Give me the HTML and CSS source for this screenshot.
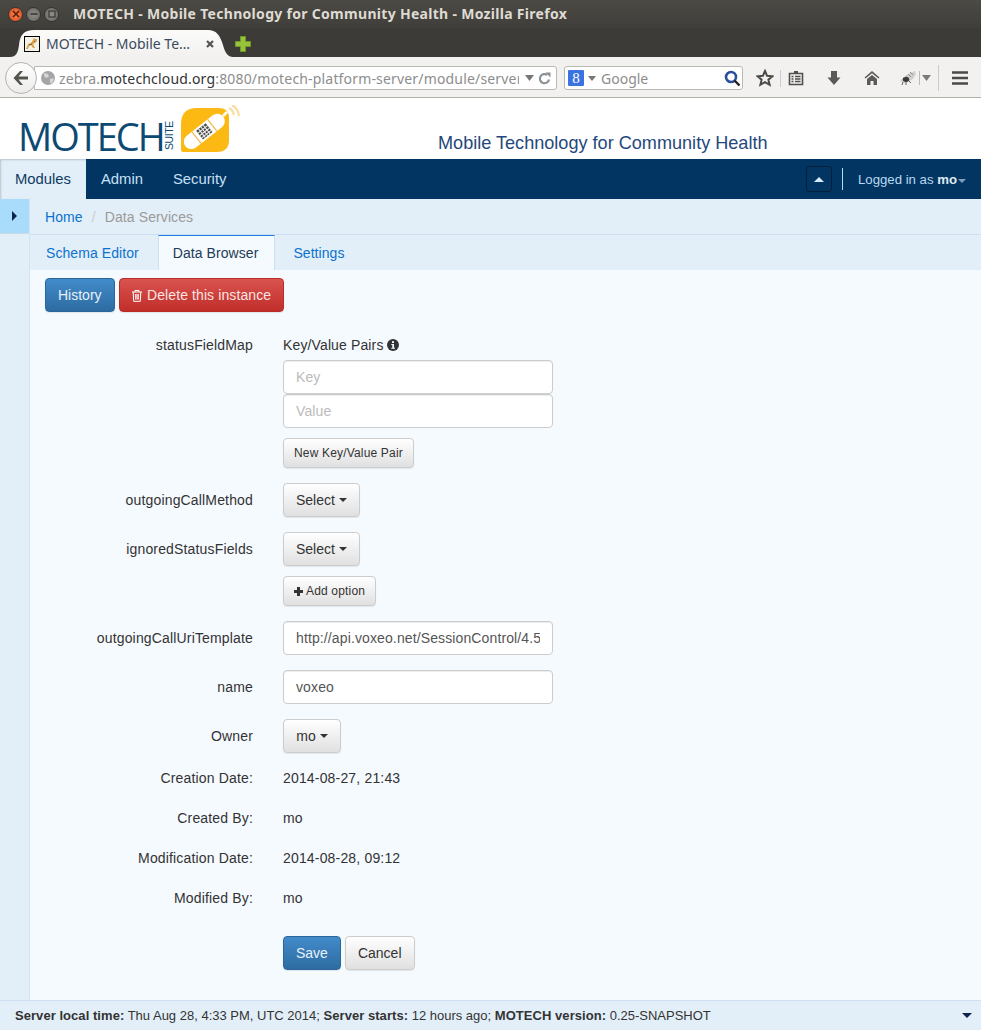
FILE: index.html
```html
<!DOCTYPE html>
<html lang="en">
<head>
<meta charset="utf-8">
<title>MOTECH - Mobile Technology for Community Health</title>
<link rel="stylesheet" href="styles.css">
</head>
<body>
<div class="chrome">
  <div class="titlebar">
    <div class="winbtns">
      <span class="winbtn close"><svg width="8" height="8" viewBox="0 0 8 8"><path d="M1 1l6 6M7 1L1 7" stroke="#5a1c0a" stroke-width="1.6"/></svg></span>
      <span class="winbtn"><svg width="8" height="8" viewBox="0 0 8 8"><path d="M0.5 4h7" stroke="#3a3935" stroke-width="1.6"/></svg></span>
      <span class="winbtn"><svg width="8" height="8" viewBox="0 0 8 8"><rect x="1" y="1" width="6" height="6" fill="none" stroke="#3a3935" stroke-width="1.2"/></svg></span>
    </div>
    <div class="wintitle">MOTECH - Mobile Technology for Community Health - Mozilla Firefox</div>
  </div>
  <div class="tabbar">
    <div class="tab">
      <svg class="favicon" width="16" height="16" viewBox="0 0 16 16"><rect x=".5" y=".5" width="15" height="15" fill="#f4f1e6" stroke="#000"/><path d="M2 13l2-5 3-1 2-3 1-2 1 1 2 0 0 2-2 2-2 1 2 4-2 0-2-3-2 1-1 3z" fill="#d9a24a"/><path d="M5 9l3-1M10 5l1 1" stroke="#7a5a2a"/></svg>
      <span class="tabtext">MOTECH - Mobile Te…</span>
      <svg class="tabclose" width="10" height="10" viewBox="0 0 10 10"><path d="M2 2l6 6M8 2l-6 6" stroke="#55544f" stroke-width="2.2"/></svg>
    </div>
    <svg class="newtab" width="18" height="18" viewBox="0 0 18 18"><path d="M6.500 1.500h5v5h5v5h-5v5h-5v-5h-5v-5h5z" fill="#97c23c" stroke="#6f9a26"/></svg>
  </div>
  <div class="urlbar">
    <div class="backbtn"><svg width="18" height="16" viewBox="0 0 18 16"><path d="M8 1L1.500 8 8 15h3L6.500 9.600H16V6.400H6.500L11 1z" fill="#55544f"/></svg></div>
    <div class="urlfield">
      <svg class="globe" width="16" height="16" viewBox="0 0 16 16"><circle cx="8" cy="8" r="7" fill="#a5a5a5"/><path d="M4 3l4 1 1 3-3 1-2-2zM10 9l3-1 1 2-3 4-1-2z" fill="#d5d5d5"/></svg>
      <span class="urltext"><span class="urldim">zebra.</span>motechcloud.org<span class="urldim">:8080/motech-platform-server/module/server</span></span>
      <svg class="urlarrow" width="9" height="6" viewBox="0 0 9 6"><path d="M0 0h9L4.500 6z" fill="#777"/></svg>
      <svg class="reload" width="13" height="13" viewBox="0 0 13 13"><path d="M11 7.500A4.600 4.600 0 1 1 9.300 3" fill="none" stroke="#8a9298" stroke-width="2.200"/><path d="M7.500 0.500h5v5z" fill="#8a9298"/></svg>
    </div>
    <div class="searchfield">
      <span class="gicon">8</span>
      <svg class="searcharrow" width="8" height="5" viewBox="0 0 8 5"><path d="M0 0h8L4 5z" fill="#777"/></svg>
      <span class="searchtext">Google</span>
      <svg class="magnifier" width="17" height="17" viewBox="0 0 17 17"><circle cx="7" cy="7" r="5" fill="#fff" stroke="#2a4f9e" stroke-width="2.600"/><path d="M10.500 10.500l5 5" stroke="#222" stroke-width="2.400"/></svg>
    </div>
    <div class="tools">
      <svg class="tool-star" width="18" height="18" viewBox="0 0 18 18"><path d="M9 2l2.100 4.800 5.200.5-3.900 3.400 1.200 5.100L9 13.100l-4.600 2.700 1.200-5.100L1.700 7.300l5.200-.5z" fill="none" stroke="#4a4a46" stroke-width="2"/></svg>
      <span class="tool-sep"></span>
      <svg class="tool-clip" width="16" height="16" viewBox="0 0 16 16"><path d="M1.500 3.500h13v11h-13z" fill="none" stroke="#4f4f4b" stroke-width="1.600"/><path d="M6 1h4v3H6z" fill="#4f4f4b"/><path d="M3.500 6.500h2M7 6.500h5.500M3.500 9h2M7 9h5.500M3.500 11.500h2M7 11.500h5.500" stroke="#4f4f4b" stroke-width="1.300"/></svg>
      <svg class="tool-down" width="16" height="16" viewBox="0 0 16 16"><path d="M5 1h6v6.500h3.500L8 15 1.500 7.500H5z" fill="#5a5a56"/></svg>
      <svg class="tool-home" width="16" height="16" viewBox="0 0 16 16"><path d="M8 1L.5 7.500 1.500 8.600 8 3.200l6.500 5.400 1-1.100z" fill="#5a5a56"/><path d="M3 9l5-4 5 4v6H9.500v-4h-3v4H3z" fill="#5a5a56"/></svg>
      <svg class="tool-bug" width="16" height="14" viewBox="0 0 16 14"><path d="M0 10l5-5 5-3 5-2 1 3-3 5-5 3-4 1z" fill="#cfcfcb"/><path d="M10 1l3 3M8 3l3 3M6 5l3 3" stroke="#8f8f8b"/><ellipse cx="6" cy="8.500" rx="3.200" ry="2.400" fill="#3a3a38"/><path d="M3 11l-1 3M6 11v3M9 10l2 2" stroke="#666"/></svg>
      <span class="tool-sep short"></span>
      <svg class="tool-arrow" width="9" height="6" viewBox="0 0 9 6"><path d="M0 0h9L4.500 6z" fill="#7b7b78"/></svg>
      <span class="tool-sep tall"></span>
      <svg class="tool-menu" width="16" height="14" viewBox="0 0 16 14"><path d="M0 1.500h16M0 7h16M0 12.500h16" stroke="#4a4a46" stroke-width="2.600"/></svg>
    </div>
  </div>
</div>

<header class="brand">
  <div class="logo">
    <span class="logotext">MOTECH</span>
    <span class="suite">SUITE</span>
    <svg class="logomark" width="62" height="50" viewBox="0 0 62 50">
      <path d="M17 3H39Q49 3 49 13V35Q49 47 37 47H3Q1 47 1 45V19Q1 3 17 3z" fill="#fdb913"/>
      <g transform="rotate(-38 24 26)">
        <rect x="0" y="19" width="48" height="15" rx="7.500" fill="#fff"/>
        <path d="M14 19v15M34 19v15" stroke="#f2b84a" stroke-width="1.200"/>
        <rect x="18" y="21" width="12" height="11" fill="#4d4d4a"/>
        <path d="M21 21v11M24 21v11M27 21v11M18 24h12M18 27h12M18 30h12" stroke="#f2f2f2" stroke-width="1"/>
      </g>
      <path d="M43 11l4-4" stroke="#fff" stroke-width="2.500"/>
      <path d="M49 3q4 2 5 7M52 0q6 3 7 11" fill="none" stroke="#fbdca0" stroke-width="2.200"/>
    </svg>
  </div>
  <div class="tagline">Mobile Technology for Community Health</div>
</header>

<nav class="topnav">
  <ul class="navlist">
    <li class="navitem active">Modules</li>
    <li class="navitem">Admin</li>
    <li class="navitem">Security</li>
  </ul>
  <div class="navright">
    <button class="collapse" type="button"><span class="caret-up"></span></button>
    <span class="navdiv"></span>
    <span class="login">Logged in as <b>mo</b><span class="caret-login"></span></span>
  </div>
</nav>

<div class="layout">
  <aside class="sidebar">
    <div class="sidetoggle"><span class="caret-right"></span></div>
  </aside>
  <main class="main">
    <div class="breadcrumb"><a>Home</a><span class="bsep">/</span><span class="bcur">Data Services</span></div>
    <div class="tabs">
      <a class="subtab">Schema Editor</a>
      <a class="subtab active">Data Browser</a>
      <a class="subtab">Settings</a>
    </div>
    <div class="content">
      <div class="actions">
        <button class="btn primary" type="button">History</button>
        <button class="btn danger" type="button"><svg class="trash" width="12" height="13" viewBox="0 0 12 13"><path d="M1 3h10M4 3V1.500h4V3M2.200 3l.5 9.300h6.600L9.800 3M4.700 5v5.500M6 5v5.500M7.300 5v5.500" fill="none" stroke="#fff" stroke-width="1"/></svg> Delete this instance</button>
      </div>
      <form class="form">
        <div class="row first">
          <label class="lbl">statusFieldMap</label>
          <div class="val">
            <div class="kvtitle">Key/Value Pairs <svg class="info" width="12" height="12" viewBox="0 0 12 12"><circle cx="6" cy="6" r="6" fill="#333"/><rect x="5" y="2.200" width="2" height="1.800" fill="#f5faff"/><path d="M4.300 5h2.700v3.800h1v1H4.300v-1h1V6H4.300z" fill="#f5faff"/></svg></div>
            <input class="input kv" placeholder="Key">
            <input class="input kv2" placeholder="Value">
            <button class="btn small kvbtn" type="button">New Key/Value Pair</button>
          </div>
        </div>
        <div class="row">
          <label class="lbl pad">outgoingCallMethod</label>
          <div class="val"><button class="btn" type="button">Select <span class="caret"></span></button></div>
        </div>
        <div class="row">
          <label class="lbl pad">ignoredStatusFields</label>
          <div class="val">
            <button class="btn" type="button">Select <span class="caret"></span></button>
            <button class="btn small addopt" type="button"><svg width="9" height="9" viewBox="0 0 9 9"><path d="M3 0h3v3h3v3H6v3H3V6H0V3h3z" fill="#333"/></svg> Add option</button>
          </div>
        </div>
        <div class="row">
          <label class="lbl pad">outgoingCallUriTemplate</label>
          <div class="val"><input class="input" value="http://api.voxeo.net/SessionControl/4.5.40/VoiceXML.start"></div>
        </div>
        <div class="row">
          <label class="lbl pad">name</label>
          <div class="val"><input class="input" value="voxeo"></div>
        </div>
        <div class="row">
          <label class="lbl pad">Owner</label>
          <div class="val"><button class="btn owner" type="button">mo <span class="caret"></span></button></div>
        </div>
        <div class="row textrow"><label class="lbl">Creation Date:</label><div class="val">2014-08-27, 21:43</div></div>
        <div class="row textrow"><label class="lbl">Created By:</label><div class="val">mo</div></div>
        <div class="row textrow"><label class="lbl">Modification Date:</label><div class="val">2014-08-28, 09:12</div></div>
        <div class="row textrow"><label class="lbl">Modified By:</label><div class="val">mo</div></div>
        <div class="row savebar">
          <span></span>
          <div class="val savebtns">
            <button class="btn primary" type="button">Save</button>
            <button class="btn" type="button">Cancel</button>
          </div>
        </div>
      </form>
    </div>
  </main>
</div>

<footer class="footer">
  <div class="status"><b>Server local time:</b> Thu Aug 28, 4:33 PM, UTC 2014; <b>Server starts:</b> 12 hours ago; <b>MOTECH version:</b> 0.25-SNAPSHOT</div>
  <span class="caret-foot"></span>
</footer>
</body>
</html>
```
FILE: styles.css
```css
* { box-sizing: border-box; }
html, body { margin: 0; padding: 0; }
body { width: 981px; height: 1030px; overflow: hidden; display: flex; flex-direction: column; font-family: "Liberation Sans", Arial, sans-serif; font-size: 14px; line-height: 20px; color: #333; background: #f5faff; }

.chrome { height: 98px; flex: none; display: flex; flex-direction: column; background: #f2f1f0; border-bottom: 1px solid #b3b0ab; }
.titlebar { height: 28px; flex: none; display: flex; align-items: center; background: linear-gradient(#4b4a45, #3f3e3a); padding-left: 8px; }
.winbtns { display: flex; gap: 3px; width: 65px; }
.winbtn { width: 15px; height: 15px; border-radius: 50%; display: flex; align-items: center; justify-content: center; background: radial-gradient(#908f8a, #65645f); border: 1px solid #35342f; }
.winbtn.close { background: radial-gradient(#f5864f, #d9481c); }
.wintitle { font-family: "Noto Sans", sans-serif; font-weight: 700; font-size: 14px; color: #dfdbd2; letter-spacing: .3px; white-space: nowrap; }
.tabbar { height: 29px; flex: none; display: flex; align-items: flex-end; background: #3c3b37; padding-left: 10px; }
.tab { width: 223px; height: 27px; display: flex; align-items: center; padding: 0 18px 0 14px; background: linear-gradient(#fbfbfa, #f2f1f0); clip-path: path("M0 27C6 27 8 23 9 15C10 5 14 0 24 0L198 0C206 0 210 5 213 15C215 23 218 27 223 27Z"); }
.favicon { flex: none; margin-right: 6px; }
.tabtext { flex: 1; font-family: "Noto Sans", sans-serif; font-size: 14px; color: #3b4a5c; white-space: nowrap; overflow: hidden; }
.tabclose { flex: none; }
.newtab { margin: 0 0 4px 1px; }
.urlbar { height: 40px; flex: none; display: flex; align-items: center; padding: 2px 0 0 5px; }
.backbtn { width: 32px; height: 32px; flex: none; border-radius: 50%; display: flex; align-items: center; justify-content: center; background: linear-gradient(#fff, #ececea); border: 1px solid #b5b3ae; position: relative; z-index: 1; }
.urlfield { width: 523px; height: 24px; margin-left: -3px; display: flex; align-items: center; background: #fff; border: 1px solid #bab8b3; border-radius: 0 3px 3px 0; padding: 0 5px 0 5px; }
.globe { flex: none; margin-right: 3px; }
.urltext { flex: 1; overflow: hidden; white-space: nowrap; font-family: "Noto Sans", sans-serif; font-size: 14px; line-height: 22px; padding-top: 1px; letter-spacing: .17px; color: #333; }
.urldim { color: #8d8d8d; }
.urlarrow { flex: none; margin: 0 4px 0 6px; }
.reload { flex: none; }
.searchfield { width: 179px; height: 24px; margin-left: 7px; display: flex; align-items: center; background: #fff; border: 1px solid #bab8b3; border-radius: 3px; padding: 0 1px 0 3px; }
.gicon { width: 16px; height: 16px; flex: none; background: #3b73e3; color: #fff; font-family: "Liberation Serif", serif; font-size: 15px; line-height: 16px; text-align: center; border-radius: 1px; }
.searcharrow { flex: none; margin: 0 5px 0 4px; }
.searchtext { flex: 1; font-family: "Noto Sans", sans-serif; font-size: 14px; line-height: 22px; padding-top: 1px; color: #8d8d8d; }
.tools { display: flex; align-items: center; margin-left: 13px; }
.tool-sep { width: 1px; height: 17px; background: #c8ced4; margin: 0 7px 0 6px; }
.tool-sep.short { height: 14px; margin: 0 2px 0 3px; background: #bbb; }
.tool-sep.tall { height: 26px; margin: 0 13px 0 7px; background: #c3cdd4; }
.tool-down { margin-left: 22px; }
.tool-home { margin-left: 22px; }
.tool-bug { margin-left: 20px; }

.brand { height: 61px; flex: none; display: flex; align-items: flex-start; background: #fff; }
.logo { display: flex; width: 400px; padding: 9px 0 0 18px; }
.logotext { width: 144px; flex: none; font-family: "Open Sans", sans-serif; font-weight: 400; font-size: 38px; line-height: 36px; margin-top: 11px; letter-spacing: -2px; color: #0d4a73; white-space: nowrap; }
.suite { width: 11px; flex: none; font-size: 10.500px; line-height: 11px; letter-spacing: -.4px; color: #0d4a73; writing-mode: vertical-rl; transform: rotate(180deg); margin: 16px 0 0 2px; height: 27px; }
.logomark { margin: -2px 0 0 5px; flex: none; }
.tagline { margin: 35px 0 0 38px; font-size: 18.100px; line-height: 20px; color: #25487c; white-space: nowrap; }

.topnav { height: 40px; flex: none; display: flex; justify-content: space-between; background: #033563; }
.navlist { list-style: none; margin: 0; padding: 0; display: flex; }
.navitem { padding: 10px 15px; color: #c6e0f5; font-size: 14.800px; }
.navitem.active { width: 86px; background: #e3eff8; color: #0e3a63; box-shadow: inset 1px 1px 2px #b9c4cd; }
.navright { display: flex; align-items: center; padding-right: 15px; }
.collapse { width: 26px; height: 26px; padding: 0; display: flex; align-items: center; justify-content: center; background: #033563; border: 1px solid #021f3d; border-radius: 3px; }
.caret-up { width: 0; height: 0; border: 5px solid transparent; border-top: 0; border-bottom-color: #d5ecfb; }
.navdiv { width: 1px; height: 22px; background: #b5dcf3; margin: 0 15px 0 10px; }
.login { color: #b9d9f0; font-size: 13.200px; white-space: nowrap; padding-top: 2px; }
.login b { color: #dfe9f2; }
.caret-login { display: inline-block; vertical-align: middle; margin-left: 1px; border: 4px solid transparent; border-bottom: 0; border-top-color: #7c9fbc; }

.layout { flex: 1; display: flex; min-height: 0; }
.sidebar { width: 30px; flex: none; background: #e3eff8; border-right: 1px solid #d4e3f3; }
.sidetoggle { height: 35px; display: flex; align-items: center; justify-content: center; background: #a9dcfb; border-bottom: 1px solid #c8d8e4; }
.caret-right { width: 0; height: 0; border: 5px solid transparent; border-right: 0; border-left-color: #0d2450; }
.main { flex: 1; min-width: 0; display: flex; flex-direction: column; }
.breadcrumb { height: 36px; flex: none; padding: 8px 15px 0; background: #e3eff8; border-bottom: 1px solid #cfdff2; color: #a2a2a2; letter-spacing: .1px; }
.breadcrumb a, .subtab { color: #0b72cf; }
.bsep { color: #ccc; padding: 0 9px; }
.bcur { color: #9a9a9a; }
.tabs { height: 35px; flex: none; display: flex; gap: 2px; background: #e3eff8; letter-spacing: .07px; }
.subtab { padding: 8px 16px 0; height: 35px; }
.subtab.active { margin-left: 1px; padding: 7px 16px 0 14px; background: #f5faff; color: #223a56; border-top: 1px solid #1f7fdc; border-right: 1px solid #cfdff2; border-left: 1px solid #cfdff2; }
.content { flex: 1; padding: 8px 15px 0; }
.actions { display: flex; gap: 4px; }
.btn { height: 34px; padding: 0 12px; display: inline-flex; align-items: center; justify-content: center; gap: 4px; font-family: inherit; font-size: 14px; line-height: 20px; color: #333; background: linear-gradient(#fff, #e0e0e0); border: 1px solid #ccc; border-radius: 4px; box-shadow: 0 1px 1px rgba(0,0,0,.08); white-space: nowrap; }
.btn.primary { color: #e8f1f8; background: linear-gradient(#428bca, #2d6ca2); border-color: #2b669a; }
.btn.danger { color: #f8e4e3; background: linear-gradient(#d9534f, #c12e2a); border-color: #b92c28; width: 165px; letter-spacing: .1px; }
.btn.owner { width: 58px; }
.btn.small { height: 30px; padding: 0 10px; font-size: 12px; letter-spacing: .17px; }
.trash { flex: none; }
.form { margin-top: 16px; display: flex; flex-direction: column; }
.row { display: grid; grid-template-columns: 208px 270px; column-gap: 30px; margin-bottom: 15px; }
.lbl { text-align: right; white-space: nowrap; letter-spacing: .16px; }
.lbl.pad { padding-top: 7px; }
.row.first .lbl { padding-top: 7px; }
.val { display: flex; flex-direction: column; align-items: flex-start; }
.textrow .val { letter-spacing: .17px; }
.kvtitle { display: flex; align-items: flex-start; gap: 3px; height: 32px; padding-top: 7px; letter-spacing: .13px; }
.info { flex: none; margin-top: 4px; }
.input { width: 270px; height: 34px; padding: 6px 12px; font-family: inherit; font-size: 14px; line-height: 20px; letter-spacing: .12px; color: #555; background: #fff; border: 1px solid #ccc; border-radius: 4px; box-shadow: inset 0 1px 1px rgba(0,0,0,.075); }
.input::placeholder { color: #bbb; opacity: 1; }
.kvbtn { margin-top: 10px; }
.addopt { margin-top: 10px; gap: 3px; padding: 0 10px; }
.caret { display: inline-block; margin-left: 0; border: 4px solid transparent; border-bottom: 0; border-top-color: #333; }
.textrow { margin-bottom: 20px; }
.savebar { margin: 8px 0 0; }
.savebtns { flex-direction: row; gap: 4px; }

.footer { height: 30px; flex: none; display: flex; align-items: center; justify-content: space-between; padding: 0 9px 0 15px; background: #e3eff8; border-top: 1px solid #cfdff2; font-size: 13px; color: #333; }
.status b { letter-spacing: .05px; }
.caret-foot { border: 5px solid transparent; border-bottom: 0; border-top-color: #0d2450; }
```
